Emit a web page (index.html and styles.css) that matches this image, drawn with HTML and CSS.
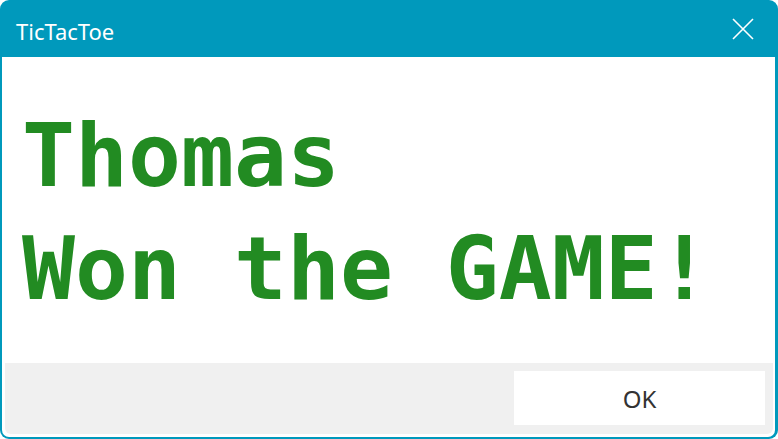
FILE: index.html
```html
<!DOCTYPE html>
<html>
<head>
<meta charset="utf-8">
<link rel="stylesheet" href="styles.css">
</head>
<body>
<div class="window">
  <div class="titlebar">
    <span class="title">TicTacToe</span>
    <span class="close">
      <svg width="22" height="22" viewBox="0 0 22 22"><path d="M1 1 L21 21 M21 1 L1 21" stroke="#fff" stroke-width="1.6" fill="none"/></svg>
    </span>
  </div>
  <div class="client">
    <div class="message">
      <div class="line">Thomas</div>
      <div class="line">Won the GAME!</div>
    </div>
    <div class="footer">
      <button class="ok">OK</button>
    </div>
  </div>
</div>
</body>
</html>
```

FILE: styles.css
```css
html, body {
  margin: 0;
  padding: 0;
  background: #ffffff;
}
.window {
  width: 778px;
  height: 439px;
  box-sizing: border-box;
  background: #0099bc;
  border-radius: 9px;
  overflow: hidden;
  display: flex;
  flex-direction: column;
  padding: 0 3px 2px 2px;
}
.titlebar {
  height: 57px;
  flex: none;
  display: flex;
  align-items: center;
  justify-content: space-between;
  padding: 0 21px 0 14px;
}
.title {
  font-family: "Noto Sans", sans-serif;
  font-size: 22px;
  color: #ffffff;
  margin-top: 4px;
}
.close {
  display: flex;
  margin-top: 1px;
}
.client {
  flex: 1;
  min-height: 0;
  background: #ffffff;
  display: flex;
  flex-direction: column;
  border-radius: 0 0 7px 7px;
  padding: 0 2px 3px 3px;
}
.message {
  flex: 1;
  min-height: 0;
  padding: 42px 0 0 17px;
  font-family: "DejaVu Sans Mono", monospace;
  font-weight: bold;
  font-size: 88px;
  line-height: 113px;
  color: #228b22;
}
.line {
  white-space: pre;
}
.footer {
  height: 71px;
  flex: none;
  background: #f0f0f0;
  border-radius: 0 0 6px 6px;
  display: flex;
  justify-content: flex-end;
  align-items: flex-start;
  padding: 8px 8px 0 0;
  box-sizing: border-box;
}
.ok {
  width: 251px;
  height: 54px;
  border: none;
  background: #ffffff;
  font-family: "Noto Sans", sans-serif;
  font-size: 24px;
  color: #333333;
  padding: 0;
}
```
